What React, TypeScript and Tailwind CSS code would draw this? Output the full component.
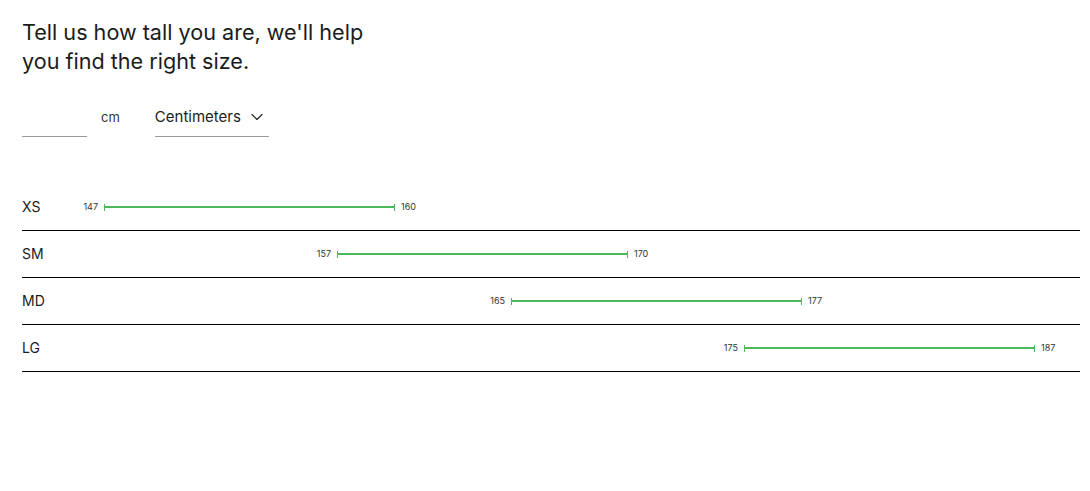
import { ChevronDown } from "lucide-react"

const SIZES = [
  { label: "XS", min: 147, max: 160, start: 104 },
  { label: "SM", min: 157, max: 170, start: 337 },
  { label: "MD", min: 165, max: 177, start: 511 },
  { label: "LG", min: 175, max: 187, start: 744 },
]

function RangeBar({ min, max, start }: { min: number; max: number; start: number }) {
  // row label column ends at x=62, min label + gap is 26px wide
  return (
    <div className="flex items-center" style={{ marginLeft: start - 26 - 62 }}>
      <span className="w-[20px] text-right text-[9px] text-[#333]">{min}</span>
      <div className="ml-[6px] flex w-[291px] items-center">
        <span className="h-[7px] w-px bg-[#4cb85a]" />
        <span className="h-[2px] flex-1 bg-[#4cb85a]" />
        <span className="h-[7px] w-px bg-[#4cb85a]" />
      </div>
      <span className="ml-[6px] text-[9px] text-[#333]">{max}</span>
    </div>
  )
}

export default function App() {
  return (
    <div className="min-h-screen bg-white pl-[22px] pr-[10px] pt-[18px] font-['Inter',sans-serif] text-[#1c1c1c]">
      <h1 className="max-w-[370px] text-[21.6px] leading-[29px] font-normal">
        Tell us how tall you are, we'll help you find the right size.
      </h1>

      <div className="mt-[31px] flex items-end">
        <div className="h-[30px] w-[65px] border-b border-[#9a9a9a]" />
        <span className="mb-[10px] ml-[14px] text-[13px] text-[#333]">cm</span>
        <div className="ml-[35px] flex h-[30px] w-[114px] items-start border-b border-[#9a9a9a]">
          <span className="text-[15px] leading-[20px]">Centimeters</span>
          <ChevronDown className="ml-[6px] h-5 w-5" strokeWidth={1.3} />
        </div>
      </div>

      <div className="mt-[47px]">
        {SIZES.map((s) => (
          <div key={s.label} className="flex h-[47px] items-center border-b border-black">
            <span className="-mt-[2px] w-[40px] shrink-0 text-[14px]">{s.label}</span>
            <RangeBar min={s.min} max={s.max} start={s.start} />
          </div>
        ))}
      </div>
    </div>
  )
}
